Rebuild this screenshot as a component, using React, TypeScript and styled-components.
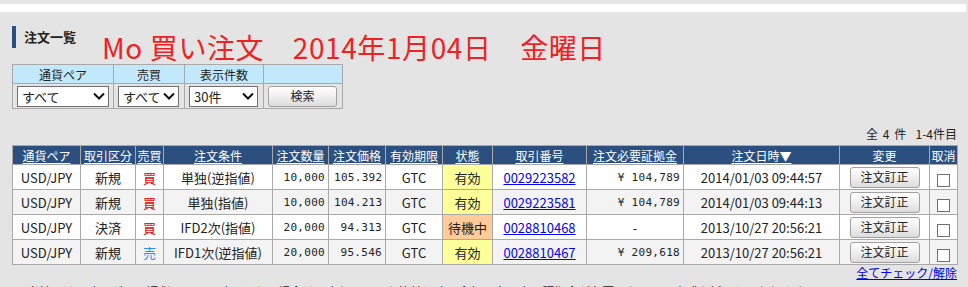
import styled, { createGlobalStyle } from "styled-components";

const GlobalStyle = createGlobalStyle`
  html, body {
    margin: 0;
    padding: 0;
    background: #e4e4e4;
    font-family: "Noto Sans CJK JP", "Noto Sans", sans-serif;
    color: #222;
    overflow: hidden;
  }
`;

type Order = {
  pair: string;
  kind: string;
  side: "買" | "売";
  condition: string;
  qty: string;
  price: string;
  term: string;
  status: string;
  number: string;
  margin: string;
  date: string;
};

const orders: Order[] = [
  {
    pair: "USD/JPY",
    kind: "新規",
    side: "買",
    condition: "単独(逆指値)",
    qty: "10,000",
    price: "105.392",
    term: "GTC",
    status: "有効",
    number: "0029223582",
    margin: "¥ 104,789",
    date: "2014/01/03 09:44:57",
  },
  {
    pair: "USD/JPY",
    kind: "新規",
    side: "買",
    condition: "単独(指値)",
    qty: "10,000",
    price: "104.213",
    term: "GTC",
    status: "有効",
    number: "0029223581",
    margin: "¥ 104,789",
    date: "2014/01/03 09:44:13",
  },
  {
    pair: "USD/JPY",
    kind: "決済",
    side: "買",
    condition: "IFD2次(指値)",
    qty: "20,000",
    price: "94.313",
    term: "GTC",
    status: "待機中",
    number: "0028810468",
    margin: "-",
    date: "2013/10/27 20:56:21",
  },
  {
    pair: "USD/JPY",
    kind: "新規",
    side: "売",
    condition: "IFD1次(逆指値)",
    qty: "20,000",
    price: "95.546",
    term: "GTC",
    status: "有効",
    number: "0028810467",
    margin: "¥ 209,618",
    date: "2013/10/27 20:56:21",
  },
];

const columns = [
  { label: "通貨ペア", width: 68, link: true },
  { label: "取引区分", width: 55, link: true },
  { label: "売買", width: 28, link: true },
  { label: "注文条件", width: 109, link: true },
  { label: "注文数量", width: 56, link: true },
  { label: "注文価格", width: 57, link: true },
  { label: "有効期限", width: 57, link: true },
  { label: "状態", width: 50, link: true },
  { label: "取引番号", width: 94, link: true },
  { label: "注文必要証拠金", width: 97, link: true },
  { label: "注文日時▼", width: 156, link: true },
  { label: "変更", width: 90, link: false },
  { label: "取消", width: 28, link: false },
];

const TopStrip = styled.div`
  height: 4px;
  width: 966px;
  background: #e4e4e4;
  border-bottom-left-radius: 5px;
`;

const WhiteBand = styled.div`
  height: 8px;
  width: 966px;
  background: #fff;
`;

const Panel = styled.div`
  width: 966px;
  height: 275px;
  box-sizing: border-box;
  background: #e4e4e4;
  border-top-left-radius: 6px;
  padding: 0 9px 0 12px;
`;

const Header = styled.div`
  display: flex;
  align-items: flex-start;
  height: 52px;
  box-sizing: border-box;
  padding-top: 14px;
`;

const Title = styled.h2`
  margin: 0;
  height: 22px;
  line-height: 22px;
  border-left: 4px solid #2b4f80;
  padding-left: 8px;
  font-size: 13px;
  font-weight: bold;
  color: #222;
`;

const Banner = styled.div`
  margin: 5px 0 0 26px;
  line-height: 32px;
  font-size: 28px;
  letter-spacing: 0.6px;
  color: #ee2222;
  white-space: pre;
`;

const FilterTable = styled.table`
  border-collapse: collapse;
  font-size: 12px;
`;

const FilterHead = styled.th<{ $w: number }>`
  width: ${(p) => p.$w}px;
  height: 18px;
  padding: 0;
  background: #c2e9fb;
  border: 1px solid #a9a9a9;
  font-weight: normal;
  color: #222;
`;

const FilterCell = styled.td`
  height: 24px;
  padding: 0 4px;
  background: #e4e4e4;
  border: 1px solid #a9a9a9;
`;

const SelectBox = styled.div<{ $w: number }>`
  display: flex;
  align-items: center;
  justify-content: space-between;
  width: ${(p) => p.$w}px;
  height: 21px;
  box-sizing: border-box;
  padding: 0 3px 0 4px;
  background: #fff;
  border: 1px solid #6f6f6f;
  font-size: 13px;
`;

const GlossButton = styled.button<{ $w: number }>`
  width: ${(p) => p.$w}px;
  height: 21px;
  padding: 0;
  border: 1px solid #a0a0a0;
  border-radius: 3px;
  background: linear-gradient(to bottom, #ffffff 0%, #f1f1f1 45%, #dcdcdc 100%);
  font-family: inherit;
  font-size: 12px;
  line-height: 17px;
  color: #222;
  display: flex;
  align-items: flex-start;
  justify-content: center;
`;

const CountLine = styled.div`
  margin-top: 16px;
  height: 18px;
  line-height: 18px;
  text-align: right;
  font-size: 12px;
  word-spacing: 2px;
  margin-bottom: 2px;
`;

const OrderTable = styled.table`
  border-collapse: collapse;
  width: 946px;
  table-layout: fixed;
  font-size: 13px;
`;

const HeadCell = styled.th<{ $link: boolean }>`
  height: 18px;
  padding: 0;
  background: #2b5080;
  border: 1px solid #a9a9a9;
  color: #fff;
  font-weight: normal;
  font-size: 12px;
  white-space: nowrap;
  text-decoration: ${(p) => (p.$link ? "underline" : "none")};
  text-underline-offset: 2px;
`;

const Row = styled.tr<{ $odd: boolean }>`
  background: ${(p) => (p.$odd ? "#f3f3f3" : "#ffffff")};
`;

const Cell = styled.td<{ $align?: "left" | "right" | "center"; $bg?: string }>`
  height: 24px;
  padding: 0 5px;
  border: 1px solid #a9a9a9;
  text-align: ${(p) => p.$align ?? "center"};
  background: ${(p) => p.$bg ?? "transparent"};
  white-space: nowrap;
`;

const MonoCell = styled(Cell)`
  font-family: "DejaVu Sans Mono", "Liberation Mono", monospace;
  font-size: 11px;
  letter-spacing: 0.3px;
  padding-right: 3px;
`;

const Side = styled.span<{ $buy: boolean }>`
  color: ${(p) => (p.$buy ? "#ee0000" : "#1e90ff")};
`;

const OrderLink = styled.a`
  color: #0000ee;
  text-decoration: underline;
  font-size: 13px;
`;

const Check = styled.span`
  display: inline-block;
  width: 13px;
  height: 13px;
  margin-top: 3px;
  box-sizing: border-box;
  border: 1px solid #6f6f6f;
  background: #fff;
  vertical-align: middle;
`;

const FooterLink = styled.div`
  height: 16px;
  line-height: 16px;
  text-align: right;
  font-size: 12px;
  a {
    color: #0000ee;
    text-decoration: underline;
  }
`;

const Note = styled.p`
  margin: 2px 0 0;
  font-size: 12px;
  white-space: nowrap;
  color: #222;
`;

const Chevron = () => (
  <svg width="12" height="8" viewBox="0 0 12 8">
    <path d="M1 1.5 L6 6.5 L11 1.5" fill="none" stroke="#111" strokeWidth="2" />
  </svg>
);

const statusColor = (s: string) => (s === "待機中" ? "#ffcc99" : "#ffff99");

export default function App() {
  return (
    <>
      <GlobalStyle />
      <TopStrip />
      <WhiteBand />
      <Panel>
        <Header>
          <Title>注文一覧</Title>
          <Banner>Mo 買い注文　2014年1月04日　金曜日</Banner>
        </Header>
        <FilterTable>
          <thead>
            <tr>
              <FilterHead $w={100}>通貨ペア</FilterHead>
              <FilterHead $w={70}>売買</FilterHead>
              <FilterHead $w={78}>表示件数</FilterHead>
              <FilterHead $w={78}></FilterHead>
            </tr>
          </thead>
          <tbody>
            <tr>
              <FilterCell>
                <SelectBox $w={92}>
                  すべて
                  <Chevron />
                </SelectBox>
              </FilterCell>
              <FilterCell>
                <SelectBox $w={61}>
                  すべて
                  <Chevron />
                </SelectBox>
              </FilterCell>
              <FilterCell>
                <SelectBox $w={69}>
                  30件
                  <Chevron />
                </SelectBox>
              </FilterCell>
              <FilterCell>
                <GlossButton $w={69}>検索</GlossButton>
              </FilterCell>
            </tr>
          </tbody>
        </FilterTable>
        <CountLine>全 4 件 &nbsp;1-4件目</CountLine>
        <OrderTable>
          <colgroup>
            {columns.map((c) => (
              <col key={c.label} style={{ width: c.width }} />
            ))}
          </colgroup>
          <thead>
            <tr>
              {columns.map((c) => (
                <HeadCell key={c.label} $link={c.link}>
                  {c.label}
                </HeadCell>
              ))}
            </tr>
          </thead>
          <tbody>
            {orders.map((o, i) => (
              <Row key={o.number} $odd={i % 2 === 1}>
                <Cell>{o.pair}</Cell>
                <Cell>{o.kind}</Cell>
                <Cell>
                  <Side $buy={o.side === "買"}>{o.side}</Side>
                </Cell>
                <Cell>{o.condition}</Cell>
                <MonoCell $align="right">{o.qty}</MonoCell>
                <MonoCell $align="right">{o.price}</MonoCell>
                <Cell>{o.term}</Cell>
                <Cell $bg={statusColor(o.status)}>{o.status}</Cell>
                <Cell>
                  <OrderLink href="#">{o.number}</OrderLink>
                </Cell>
                {o.margin === "-" ? (
                  <Cell>-</Cell>
                ) : (
                  <MonoCell $align="right">{o.margin}</MonoCell>
                )}
                <Cell>{o.date}</Cell>
                <Cell>
                  <GlossButton $w={70} style={{ margin: "0 auto" }}>
                    注文訂正
                  </GlossButton>
                </Cell>
                <Cell>
                  <Check />
                </Cell>
              </Row>
            ))}
          </tbody>
        </OrderTable>
        <FooterLink>
          <a href="#">全てチェック/解除</a>
        </FooterLink>
        <Note>
          ※ 当社では、建玉が同一通貨ペアで両建てとなる場合は、売りと買いを比較し建玉金額の多い方の証拠金が必要となるMAX方式を採用しております。
        </Note>
      </Panel>
    </>
  );
}
